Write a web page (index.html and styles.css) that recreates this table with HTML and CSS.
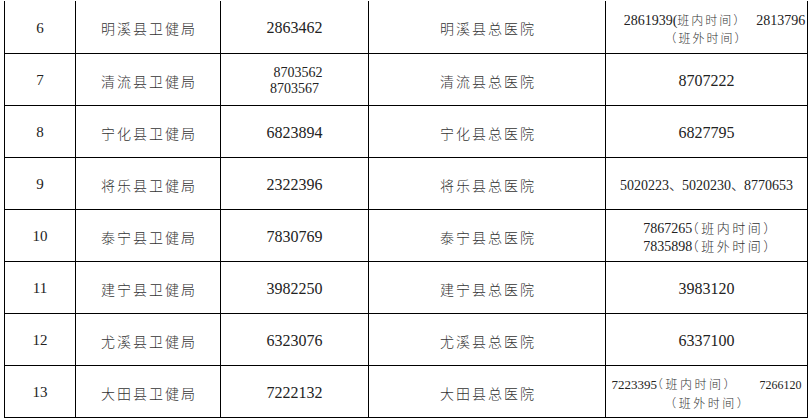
FILE: index.html
```html
<!DOCTYPE html>
<html lang="zh-CN">
<head>
<meta charset="utf-8">
<title>县卫健局与总医院联系电话</title>
<link rel="stylesheet" href="styles.css">
</head>
<body>
<table class="grid">
  <colgroup>
    <col class="c1"><col class="c2"><col class="c3"><col class="c4"><col class="c5">
  </colgroup>
  <tbody>
    <tr class="first">
      <td class="idx">6</td>
      <td><span class="cn">明溪县卫健局</span></td>
      <td class="num">2863462</td>
      <td><span class="cn">明溪县总医院</span></td>
      <td class="multi">
        <div class="line shift"><span class="n14">2861939(</span><span class="cs12">班内时间）</span><span class="gap15"></span><span class="n14">2813796</span></div>
        <div class="line"><span class="cs12">（班外时间）</span></div>
      </td>
    </tr>
    <tr>
      <td class="idx">7</td>
      <td><span class="cn">清流县卫健局</span></td>
      <td class="multi two16">
        <div class="line n14">&nbsp;&nbsp;8703562</div>
        <div class="line n14">8703567</div>
      </td>
      <td><span class="cn">清流县总医院</span></td>
      <td class="num">8707222</td>
    </tr>
    <tr>
      <td class="idx">8</td>
      <td><span class="cn">宁化县卫健局</span></td>
      <td class="num">6823894</td>
      <td><span class="cn">宁化县总医院</span></td>
      <td class="num">6827795</td>
    </tr>
    <tr>
      <td class="idx">9</td>
      <td><span class="cn">将乐县卫健局</span></td>
      <td class="num">2322396</td>
      <td><span class="cn">将乐县总医院</span></td>
      <td class="multi"><span class="n14">5020223</span><span class="dun">、</span><span class="n14">5020230</span><span class="dun">、</span><span class="n14">8770653</span></td>
    </tr>
    <tr>
      <td class="idx">10</td>
      <td><span class="cn">泰宁县卫健局</span></td>
      <td class="num">7830769</td>
      <td><span class="cn">泰宁县总医院</span></td>
      <td class="multi">
        <div class="line"><span class="n14">7867265</span><span class="cs13">（班内时间）</span></div>
        <div class="line"><span class="n14">7835898</span><span class="cs13">（班外时间）</span></div>
      </td>
    </tr>
    <tr>
      <td class="idx">11</td>
      <td><span class="cn">建宁县卫健局</span></td>
      <td class="num">3982250</td>
      <td><span class="cn">建宁县总医院</span></td>
      <td class="num">3983120</td>
    </tr>
    <tr>
      <td class="idx">12</td>
      <td><span class="cn">尤溪县卫健局</span></td>
      <td class="num">6323076</td>
      <td><span class="cn">尤溪县总医院</span></td>
      <td class="num">6337100</td>
    </tr>
    <tr>
      <td class="idx">13</td>
      <td><span class="cn">大田县卫健局</span></td>
      <td class="num">7222132</td>
      <td><span class="cn">大田县总医院</span></td>
      <td class="multi">
        <div class="line"><span class="n13">7223395</span><span class="cs12b">（班内时间）</span><span class="gap30"></span><span class="n12">7266120</span></div>
        <div class="line"><span class="cs12b">（班外时间）</span></div>
      </td>
    </tr>
  </tbody>
</table>
</body>
</html>
```

FILE: styles.css
```css
html, body {
  margin: 0;
  padding: 0;
  background: #ffffff;
}

body {
  font-family: "Liberation Serif", "Noto Sans CJK SC", serif;
  color: #222222;
}

.grid {
  border-collapse: collapse;
  table-layout: fixed;
  width: 804px;
  margin: 1px 0 0 4px;
}

.c1 { width: 71px; }
.c2 { width: 145px; }
.c3 { width: 148px; }
.c4 { width: 237px; }
.c5 { width: 202px; }

.grid tr {
  height: 52px;
}

.grid td {
  border: 1px solid #000000;
  text-align: center;
  vertical-align: middle;
  padding: 3px 0 0 0;
  white-space: nowrap;
  overflow: hidden;
}

.grid tr.first td {
  border-top: none;
}

.idx {
  font-size: 15px;
}

.num {
  font-size: 16px;
}

.cn {
  font-family: "Noto Sans CJK SC", sans-serif;
  font-weight: 300;
  font-size: 14px;
  letter-spacing: 2px;
  margin-right: -2px;
  color: #333333;
}

.multi {
  line-height: 17px;
}

.two16 {
  line-height: 16px;
}

.line {
  display: block;
}

.shift {
  padding-left: 16px;
}

.n14 { font-size: 14px; }
.n13 { font-size: 13px; }
.n12 { font-size: 12px; }

.cs12, .cs13, .cs12b, .dun {
  font-family: "Noto Sans CJK SC", sans-serif;
  font-weight: 300;
  color: #333333;
}

.cs12, .cs13, .cs12b {
  font-feature-settings: "halt" 1;
}

.cs12 {
  font-size: 12px;
  letter-spacing: 2px;
}

.cs13 {
  font-size: 13px;
  letter-spacing: 2.5px;
  margin-right: -2.5px;
}

.cs12b {
  font-size: 12px;
  letter-spacing: 2.5px;
  margin-right: -2.5px;
}

.dun {
  font-size: 14px;
  letter-spacing: -1px;
}

.gap15 {
  display: inline-block;
  width: 15px;
}

.gap30 {
  display: inline-block;
  width: 30px;
}
```
